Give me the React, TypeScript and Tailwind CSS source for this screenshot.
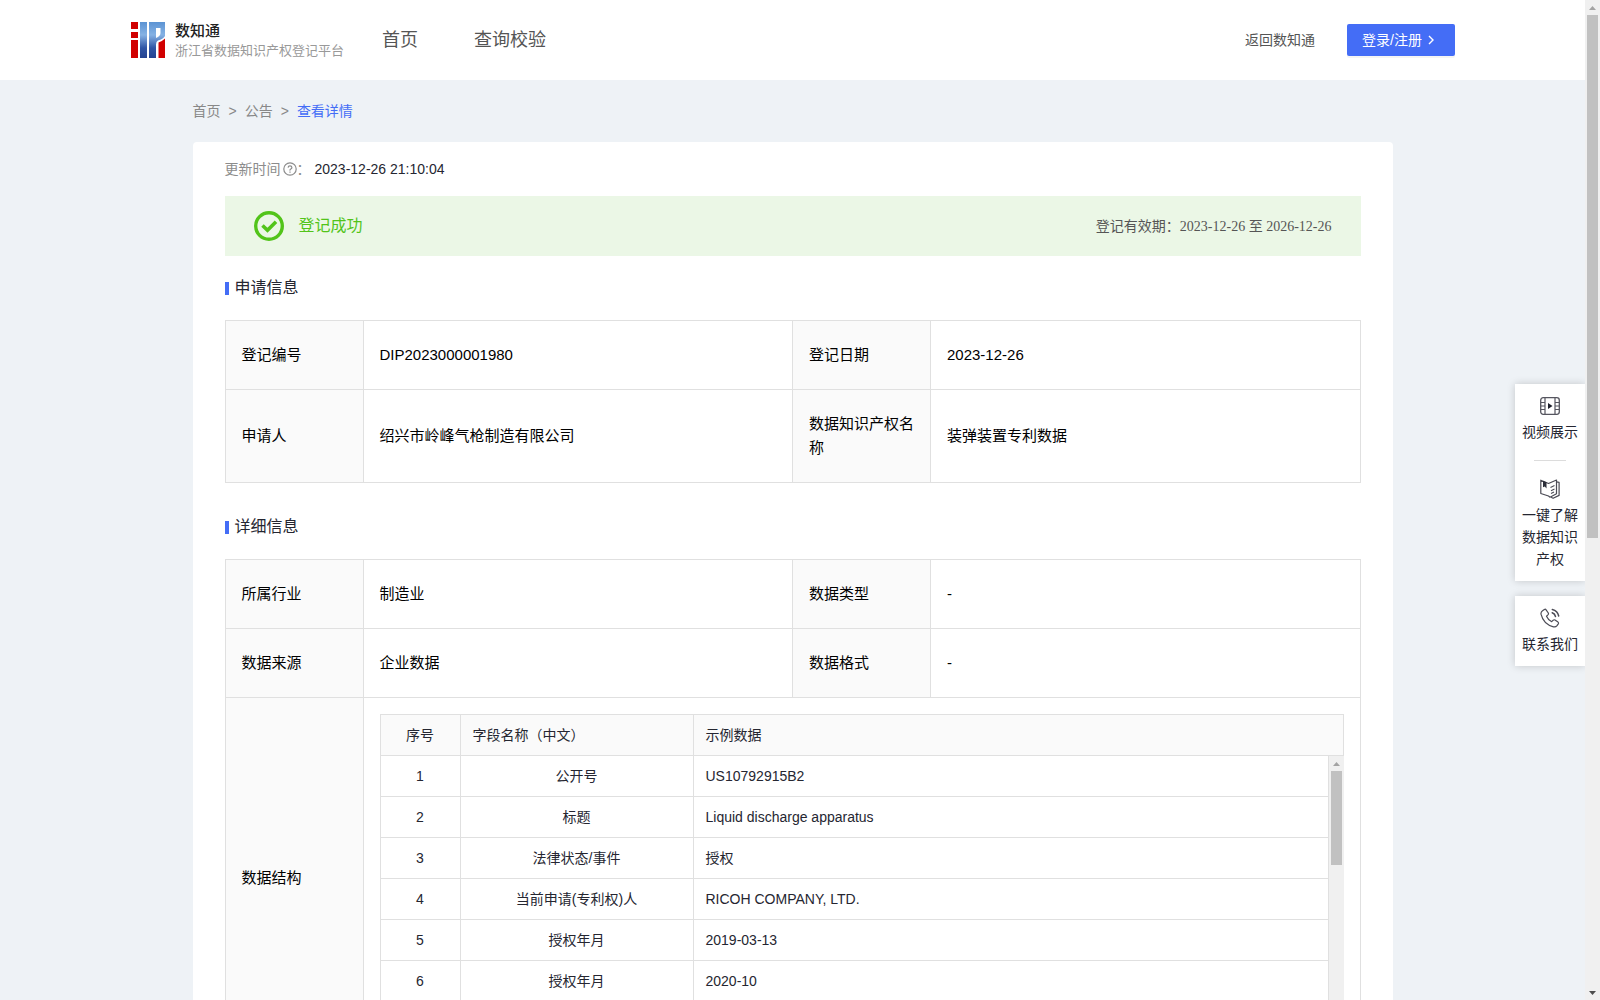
import type { ReactNode } from "react";

const line = "border border-[#e0e0e0]";

function Logo() {
  return (
    <svg width="34" height="37" viewBox="0 0 34 37" aria-hidden="true">
      <defs>
        <linearGradient id="logoBlue" x1="0" y1="0" x2="0" y2="37" gradientUnits="userSpaceOnUse">
          <stop offset="0" stopColor="#5b93d3" />
          <stop offset="0.35" stopColor="#86b2e4" />
          <stop offset="0.7" stopColor="#2f55a5" />
          <stop offset="1" stopColor="#23418f" />
        </linearGradient>
      </defs>
      <path d="M0 0h7v7H0zM0 10h7v6H0zM0 18h7v18H0z" fill="#d10000" />
      <path d="M9 0h7v36H9z" fill="url(#logoBlue)" />
      <path
        d="M18 0h16v14q-2 3-7 4.500-2 1-2 4V36h-7zM25 6v10q4.500-2 4.500-5V6z"
        fill="url(#logoBlue)"
        fillRule="evenodd"
      />
      <path d="M27.500 20.500q4-1.500 6.500-4V36h-6.500z" fill="#d10000" />
    </svg>
  );
}

function FilmIcon() {
  return (
    <svg width="20" height="20" viewBox="0 0 20 20" fill="none" stroke="#55555f" aria-hidden="true">
      <rect x="0.700" y="1.700" width="18.600" height="16.600" rx="2.500" strokeWidth="1.300" />
      <path d="M5 2v16M15 2v16M1 6.500h4M1 10h4M1 13.500h4M15 6.500h4M15 10h4M15 13.500h4" strokeWidth="1.200" />
      <path d="M8 7l4.500 3L8 13z" fill="#1d1f2b" stroke="none" />
    </svg>
  );
}

function BookIcon() {
  return (
    <svg width="20" height="20" viewBox="0 0 20 20" fill="none" stroke="#4b4b55" strokeLinejoin="round" aria-hidden="true">
      <path d="M.8 1.200 8.500 4.500 16.500 1v13.800l-6.500 3.400-1.500-1.200L.8 14.500z" strokeWidth="1.200" />
      <path d="M16.500 2.800l2.600.6v13l-6 2.900-2-1" strokeWidth="1.200" />
      <path d="M3 1.800l3.500 1.500V9.500L4.800 7.500 3 8.300z" fill="#2b2d38" stroke="none" />
      <path d="M10.500 8.600l4-2M11 11.800l3.500-1.700M11 14.500l3-1.400" strokeWidth="1.100" />
    </svg>
  );
}

function PhoneIcon() {
  return (
    <svg width="20" height="20" viewBox="0 0 20 20" fill="none" stroke="#4b4b55" strokeLinecap="round" strokeLinejoin="round" aria-hidden="true">
      <path
        d="M2.500 2.800 4.400 1.400q1-.6 1.700.4L8.300 5q.5 1-.4 1.900L6.500 8.200q1.700 3.800 5.200 5.500l1.500-1.500q.9-.8 1.800-.2l3 2.100q.9.700.3 1.700l-1.500 2.100q-1.200 1.400-3.300.9Q3.500 16.500 1 6.200.7 4 2.500 2.800z"
        strokeWidth="1.200"
      />
      <path d="M12.200 4.700q2.700.9 3.300 3.800M12.300 1.400q5.300 1.200 6.400 6.600" strokeWidth="1.500" />
    </svg>
  );
}

function SectionTitle({ children }: { children: ReactNode }) {
  return (
    <h2 className="flex h-6 items-center gap-1.5 text-[16px] text-[#252631]">
      <span className="mt-px h-[13px] w-1 bg-[#446df6]" />
      {children}
    </h2>
  );
}

function Label({ children }: { children: ReactNode }) {
  return (
    <th scope="row" className={`${line} bg-[#fafafa] px-4 py-[22px] text-left font-normal`}>
      {children}
    </th>
  );
}

function Value({ children }: { children: ReactNode }) {
  return <td className={`${line} px-4 py-[22px]`}>{children}</td>;
}

function InfoTable({ rows, children }: { rows: string[][]; children?: ReactNode }) {
  return (
    <table className="w-full table-fixed border-collapse text-[15px] leading-6 text-black">
      <colgroup>
        <col className="w-[138px]" />
        <col />
        <col className="w-[138px]" />
        <col />
      </colgroup>
      <tbody>
        {rows.map((r) => (
          <tr key={r[0]}>
            <Label>{r[0]}</Label>
            <Value>{r[1]}</Value>
            <Label>{r[2]}</Label>
            <Value>{r[3]}</Value>
          </tr>
        ))}
        {children}
      </tbody>
    </table>
  );
}

const fields = [
  ["1", "公开号", "US10792915B2"],
  ["2", "标题", "Liquid discharge apparatus"],
  ["3", "法律状态/事件", "授权"],
  ["4", "当前申请(专利权)人", "RICOH COMPANY, LTD."],
  ["5", "授权年月", "2019-03-13"],
  ["6", "授权年月", "2020-10"],
];

function FieldTable() {
  return (
    <div className="text-[14px] leading-5 text-[#252631]">
      <table className={`${line} w-full table-fixed border-collapse bg-[#fafafa]`}>
        <colgroup>
          <col className="w-20" />
          <col className="w-[233px]" />
          <col />
        </colgroup>
        <thead>
          <tr className="h-[41px]">
            <th scope="col" className={`${line} font-normal`}>序号</th>
            <th scope="col" className={`${line} px-3 text-left font-normal`}>字段名称（中文）</th>
            <th scope="col" className={`${line} px-3 text-left font-normal`}>示例数据</th>
          </tr>
        </thead>
      </table>
      <div className="flex h-[286px] overflow-hidden">
        <div className="min-w-0 flex-1">
          <table className="w-full table-fixed border-collapse">
            <colgroup>
              <col className="w-20" />
              <col className="w-[233px]" />
              <col />
            </colgroup>
            <tbody>
              {fields.map(([no, name, sample]) => (
                <tr key={no} className="h-[41px] first:h-10">
                  <td className={`${line} border-t-0 text-center`}>{no}</td>
                  <td className={`${line} border-t-0 px-3 text-center`}>{name}</td>
                  <td className={`${line} border-t-0 px-3`}>{sample}</td>
                </tr>
              ))}
            </tbody>
          </table>
        </div>
        <div className="flex w-[15px] flex-col items-center bg-[#f0f0f0]">
          <div className="flex h-[15px] items-center justify-center">
            <svg width="7" height="4" viewBox="0 0 7 4" aria-hidden="true">
              <path d="M3.500 0 7 4H0z" fill="#a3a3a3" />
            </svg>
          </div>
          <div className="h-[94px] w-[11px] bg-[#c1c1c1]" />
        </div>
      </div>
    </div>
  );
}

function DockItem({ icon, children }: { icon: ReactNode; children: ReactNode }) {
  return (
    <a href="#" className="flex flex-col items-center gap-[5px]">
      {icon}
      <span>{children}</span>
    </a>
  );
}

export default function App() {
  return (
    <div className="relative flex h-screen overflow-hidden bg-[#eef2f6] font-['Liberation_Sans','Noto_Sans_CJK_SC',sans-serif] text-[14px]">
      <div className="min-w-0 flex-1">
        <header className="flex h-20 items-center bg-white pr-[130px] pl-[131px] text-[#555]">
          <a href="#" className="flex items-center gap-2.5">
            <Logo />
            <span className="flex flex-col gap-0.5 font-['Noto_Sans_CJK_SC',sans-serif] whitespace-nowrap">
              <span className="text-[15px] leading-[18px] font-medium text-[#222]">数知通</span>
              <span className="text-[13px] leading-[18px] text-[#999]">浙江省数据知识产权登记平台</span>
            </span>
          </a>
          <nav className="ml-[38px] flex gap-14 text-[18px] whitespace-nowrap">
            <a href="#">首页</a>
            <a href="#">查询校验</a>
          </nav>
          <a href="#" className="ml-auto whitespace-nowrap">返回数知通</a>
          <button
            type="button"
            className="ml-8 flex h-8 w-[108px] items-center rounded-[2px] bg-[#446df6] pl-[15px] whitespace-nowrap text-white shadow-[0_2px_0_rgba(0,0,0,0.045)]"
          >
            登录/注册
            <svg className="ml-1" width="10" height="10" viewBox="0 0 10 10" fill="none" stroke="white" strokeWidth="1.400" aria-hidden="true">
              <path d="M3 1l4 4-4 4" />
            </svg>
          </button>
        </header>

        <main className="mx-auto w-full max-w-[1200px]">
          <nav aria-label="breadcrumb" className="flex h-[62px] items-center gap-2 text-[#888]">
            <a href="#">首页</a>
            <span>&gt;</span>
            <a href="#">公告</a>
            <span>&gt;</span>
            <a href="#" className="text-[#446df6]">查看详情</a>
          </nav>

          <div className="rounded-t bg-white px-8 pt-4">
            <div className="flex h-[22px] items-center text-[#8c8c8c]">
              更新时间
              <svg className="ml-0.5" width="14" height="14" viewBox="0 0 14 14" fill="none" stroke="#8c8c8c" aria-hidden="true">
                <circle cx="7" cy="7" r="6.200" strokeWidth="1.200" />
                <path d="M5.100 5.600Q5.200 3.900 7 3.900T8.900 5.500Q8.900 6.400 7.800 7T7 8.600M7 9.500v1.200" strokeWidth="1.200" />
              </svg>
              <span>：</span>
              <time className="ml-1 text-[#252631]">2023-12-26 21:10:04</time>
            </div>

            <div className="mt-4 flex h-[60px] items-center bg-[#ebf7e6] px-[29px]">
              <svg width="30" height="30" viewBox="0 0 30 30" fill="none" stroke="#52c41a" aria-hidden="true">
                <circle cx="15" cy="15" r="13.300" strokeWidth="3.400" />
                <path d="M8.500 14.500l5 4.800 8.500-8.500" strokeWidth="3.600" />
              </svg>
              <span className="ml-[15px] text-[16px] text-[#52c41a]">登记成功</span>
              <p className="ml-auto text-[#555]">
                登记有效期：
                <span className="font-['Liberation_Serif','Noto_Sans_CJK_SC',serif]">2023-12-26 至 2026-12-26</span>
              </p>
            </div>

            <div className="mt-5 mb-5">
              <SectionTitle>申请信息</SectionTitle>
            </div>
            <InfoTable
              rows={[
                ["登记编号", "DIP2023000001980", "登记日期", "2023-12-26"],
                ["申请人", "绍兴市岭峰气枪制造有限公司", "数据知识产权名称", "装弹装置专利数据"],
              ]}
            />

            <div className="mt-8 mb-5">
              <SectionTitle>详细信息</SectionTitle>
            </div>
            <InfoTable
              rows={[
                ["所属行业", "制造业", "数据类型", "-"],
                ["数据来源", "企业数据", "数据格式", "-"],
              ]}
            >
              <tr>
                <Label>数据结构</Label>
                <td colSpan={3} className={`${line} p-4`}>
                  <FieldTable />
                </td>
              </tr>
            </InfoTable>
          </div>
        </main>
      </div>

      <aside className="absolute top-[384px] right-[15px] flex w-[70px] flex-col gap-[15px] text-center leading-[22px] text-[#252631]">
        <div className="flex flex-col items-center bg-white px-[7px] pt-3 pb-[11px] shadow-[0_0_8px_rgba(0,0,0,0.18)]">
          <DockItem icon={<FilmIcon />}>视频展示</DockItem>
          <hr className="mt-[17px] mb-[18px] w-8 border-[#dcdcdc]" />
          <DockItem icon={<BookIcon />}>一键了解数据知识产权</DockItem>
        </div>
        <div className="bg-white px-[7px] pt-3 pb-[11px] shadow-[0_0_8px_rgba(0,0,0,0.18)]">
          <DockItem icon={<PhoneIcon />}>联系我们</DockItem>
        </div>
      </aside>

      <div className="z-10 flex w-[15px] shrink-0 flex-col items-center bg-[#f0f0f0]">
        <div className="flex h-[15px] items-center">
          <svg width="7" height="4" viewBox="0 0 7 4" aria-hidden="true">
            <path d="M3.500 0 7 4H0z" fill="#a3a3a3" />
          </svg>
        </div>
        <div className="h-[523px] w-[11px] bg-[#c1c1c1]" />
        <div className="mt-auto flex h-[15px] items-center">
          <svg width="7" height="4" viewBox="0 0 7 4" aria-hidden="true">
            <path d="M0 0h7L3.500 4z" fill="#4d4d4d" />
          </svg>
        </div>
      </div>
    </div>
  );
}
